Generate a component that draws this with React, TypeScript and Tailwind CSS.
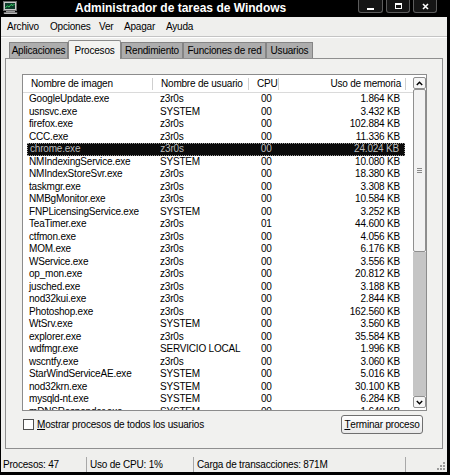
import React from 'react';

const rows: [string, string, string, string][] = [
    ['GoogleUpdate.exe', 'z3r0s', '00', '1.864 KB'],
    ['usnsvc.exe', 'SYSTEM', '00', '3.432 KB'],
    ['firefox.exe', 'z3r0s', '00', '102.884 KB'],
    ['CCC.exe', 'z3r0s', '00', '11.336 KB'],
    ['chrome.exe', 'z3r0s', '00', '24.024 KB'],
    ['NMIndexingService.exe', 'SYSTEM', '00', '10.080 KB'],
    ['NMIndexStoreSvr.exe', 'z3r0s', '00', '18.380 KB'],
    ['taskmgr.exe', 'z3r0s', '00', '3.308 KB'],
    ['NMBgMonitor.exe', 'z3r0s', '00', '10.584 KB'],
    ['FNPLicensingService.exe', 'SYSTEM', '00', '3.252 KB'],
    ['TeaTimer.exe', 'z3r0s', '01', '44.600 KB'],
    ['ctfmon.exe', 'z3r0s', '00', '4.056 KB'],
    ['MOM.exe', 'z3r0s', '00', '6.176 KB'],
    ['WService.exe', 'z3r0s', '00', '3.556 KB'],
    ['op_mon.exe', 'z3r0s', '00', '20.812 KB'],
    ['jusched.exe', 'z3r0s', '00', '3.188 KB'],
    ['nod32kui.exe', 'z3r0s', '00', '2.844 KB'],
    ['Photoshop.exe', 'z3r0s', '00', '162.560 KB'],
    ['WtSrv.exe', 'SYSTEM', '00', '3.560 KB'],
    ['explorer.exe', 'z3r0s', '00', '35.584 KB'],
    ['wdfmgr.exe', 'SERVICIO LOCAL', '00', '1.996 KB'],
    ['wscntfy.exe', 'z3r0s', '00', '3.060 KB'],
    ['StarWindServiceAE.exe', 'SYSTEM', '00', '5.016 KB'],
    ['nod32krn.exe', 'SYSTEM', '00', '30.100 KB'],
    ['mysqld-nt.exe', 'SYSTEM', '00', '6.284 KB'],
    ['mDNSResponder.exe', 'SYSTEM', '00', '1.640 KB'],
];

const SELECTED = 4;

const AppIcon = () => (
    <svg width="15" height="13" viewBox="0 0 15 13">
        <rect x="0.5" y="0.5" width="13" height="9" fill="#c9c9c9" stroke="#6b6b6b" />
        <rect x="2" y="2" width="10" height="6" fill="#0d3b2a" />
        <polyline points="2.5,6.5 4.5,5 6,6 8,3.5 10,4.5 11.5,3" fill="none" stroke="#3ee06a" strokeWidth="0.9" />
        <rect x="3" y="10" width="9" height="1.5" fill="#9a9a9a" />
        <rect x="1" y="11.5" width="13" height="1.5" fill="#d8d8d8" stroke="#6b6b6b" strokeWidth="0.5" />
    </svg>
);

const CaptionButton = ({ kind, w }: { kind: 'min' | 'max' | 'close'; w: string }) => (
    <div className={`${w} h-[13px] bg-[#151515] border border-t-0 border-[#5c5c5c] rounded-b-[3px] flex items-center justify-center`}>
        {kind === 'min' && <div className="w-[7px] h-[2px] bg-white mt-[5px]" />}
        {kind === 'max' && <div className="w-[7px] h-[6px] border border-white border-t-2" />}
        {kind === 'close' && (
            <svg width="7" height="7" viewBox="0 0 7 7">
                <path d="M1 1 L6 6 M6 1 L1 6" stroke="white" strokeWidth="1.6" />
            </svg>
        )}
    </div>
);

const Tab = ({ label, w, active }: { label: string; w: string; active?: boolean }) =>
    active ? (
        <div className={`${w} h-[19px] -mb-px relative z-10 bg-[#f3f3f1] border border-b-0 border-[#8a8a8a] rounded-t-[2px] flex items-center justify-center`}>
            {label}
        </div>
    ) : (
        <div className={`${w} h-[16px] bg-[#adadad] border border-b-0 border-[#858585] flex items-center justify-center`}>
            {label}
        </div>
    );

const HeaderSep = () => <div className="w-px h-[12px] bg-[#cfcfcf]" />;

export default function App() {
    return (
        <div
            className="w-[450px] h-[475px] bg-black flex flex-col overflow-hidden text-[10px] tracking-[-0.2px] text-black"
            style={{ fontFamily: '"Liberation Sans", Arial, sans-serif' }}
        >
            {/* title bar */}
            <div className="h-[17px] flex items-start shrink-0">
                <div className="pl-[3px] pt-[1px]">
                    <AppIcon />
                </div>
                <div className="ml-[57px] text-white font-bold text-[12px] tracking-normal leading-[16px]">
                    Administrador de tareas de Windows
                </div>
                <div className="ml-auto mr-[13px] flex gap-[3px]">
                    <CaptionButton kind="min" w="w-[25px]" />
                    <CaptionButton kind="max" w="w-[24px]" />
                    <CaptionButton kind="close" w="w-[24px]" />
                </div>
            </div>

            {/* client */}
            <div className="flex-1 ml-px mr-[3px] mb-[3px] bg-[#efefed] flex flex-col">
                {/* menu */}
                <div className="h-[19px] flex items-center pl-[6px] shrink-0">
                    <span className="w-[43px]">Archivo</span>
                    <span className="w-[49px]">Opciones</span>
                    <span className="w-[25px]">Ver</span>
                    <span className="w-[42px]">Apagar</span>
                    <span>Ayuda</span>
                </div>
                <div className="h-px bg-[#c4c4c4] shrink-0" />
                <div className="h-px bg-white shrink-0" />

                {/* tabs */}
                <div className="h-[20px] flex items-end pl-[8px] shrink-0">
                    <Tab label="Aplicaciones" w="w-[59px]" />
                    <Tab label="Procesos" w="w-[53px]" active />
                    <Tab label="Rendimiento" w="w-[62px]" />
                    <Tab label="Funciones de red" w="w-[83px]" />
                    <Tab label="Usuarios" w="w-[47px]" />
                </div>

                {/* tab panel */}
                <div className="ml-[4px] w-[438px] h-[391px] border border-[#8f8f8f] bg-[#f1f1ef] pl-[16px] pt-[15px] shrink-0">
                    {/* list view */}
                    <div className="w-[405px] h-[337px] border border-[#8c8c8c] bg-white flex">
                        <div className="w-[390px] flex flex-col">
                            <div className="h-[18px] flex items-center border-b border-[#dadada] shrink-0">
                                <div className="w-[129px] pl-[8px]">Nombre de imagen</div>
                                <HeaderSep />
                                <div className="w-[95px] pl-[8px]">Nombre de usuario</div>
                                <HeaderSep />
                                <div className="w-[29px] pl-[8px]">CPU</div>
                                <HeaderSep />
                                <div className="w-[126px] pr-[4px] text-right">Uso de memoria</div>
                                <HeaderSep />
                            </div>
                            <div className="flex-1 overflow-hidden">
                                {rows.map(([name, user, cpu, mem], i) => (
                                    <div key={name} className="h-[12.5px] flex items-center leading-[12px]">
                                        <div
                                            className={`flex items-center h-full ml-[4px] w-[378px] ${
                                                i === SELECTED
                                                    ? 'bg-[#0b0b0b] text-[#bdbdbd] border border-dotted border-[#9a9a9a]'
                                                    : ''
                                            }`}
                                        >
                                            <div className="w-[125px] pl-[2px] whitespace-nowrap">{name}</div>
                                            <div className="w-[96px] pl-[8px] whitespace-nowrap">{user}</div>
                                            <div className="w-[30px] pl-[13px]">{cpu}</div>
                                            <div className="w-[127px] pr-[5px] text-right">{mem}</div>
                                        </div>
                                    </div>
                                ))}
                            </div>
                        </div>
                        {/* scrollbar */}
                        <div className="w-[13px] flex flex-col pt-[2px] pb-[2px]">
                            <div className="h-[12px] bg-[#f6f6f6] border border-[#8f8f8f] rounded-[2px] flex items-center justify-center">
                                <svg width="7" height="5" viewBox="0 0 7 5">
                                    <path d="M0.8 4 L3.5 1.2 L6.2 4" fill="none" stroke="black" strokeWidth="1.4" />
                                </svg>
                            </div>
                            <div className="h-[163px] bg-[#f2f2f2] border border-[#8f8f8f] rounded-[2px] flex flex-col items-center justify-center gap-[1px]">
                                <div className="w-[5px] h-px bg-[#8a8a8a]" />
                                <div className="w-[5px] h-px bg-[#8a8a8a]" />
                                <div className="w-[5px] h-px bg-[#8a8a8a]" />
                            </div>
                            <div className="flex-1 bg-[#c5c5c5]" />
                            <div className="h-[12px] bg-[#f6f6f6] border border-[#8f8f8f] rounded-[2px] flex items-center justify-center">
                                <svg width="7" height="5" viewBox="0 0 7 5">
                                    <path d="M0.8 1 L3.5 3.8 L6.2 1" fill="none" stroke="black" strokeWidth="1.4" />
                                </svg>
                            </div>
                        </div>
                    </div>

                    {/* bottom row */}
                    <div className="mt-[3px] h-[20px] w-[405px] flex items-center">
                        <div className="ml-px w-[11px] h-[11px] bg-white border border-[#4f4f4f]" />
                        <div className="ml-[3px]">
                            <span className="underline">M</span>ostrar procesos de todos los usuarios
                        </div>
                        <div className="ml-auto mr-[4px] w-[82px] h-[19px] border border-[#6f6f6f] rounded-[3px] bg-gradient-to-b from-white to-[#e9e9e9] flex items-center justify-center whitespace-nowrap">
                            <span className="underline">T</span>erminar proceso
                        </div>
                    </div>
                </div>

                {/* status bar */}
                <div className="flex-1 flex items-center pt-[7px] relative">
                    <div className="w-[85px] pl-[2px]">Procesos: 47</div>
                    <div className="w-[107px] h-[15px] border-l border-[#a8a8a8] pl-[3px] flex items-center">Uso de CPU: 1%</div>
                    <div className="w-[212px] h-[15px] border-l border-[#a8a8a8] pl-[3px] flex items-center">
                        Carga de transacciones: 871M
                    </div>
                    <div className="h-[15px] border-l border-[#a8a8a8]" />
                    <svg className="absolute right-[1px] bottom-[1px]" width="11" height="11" viewBox="0 0 11 11">
                        <g fill="#9a9a9a">
                            <rect x="8" y="2" width="2" height="2" />
                            <rect x="5" y="5" width="2" height="2" />
                            <rect x="8" y="5" width="2" height="2" />
                            <rect x="2" y="8" width="2" height="2" />
                            <rect x="5" y="8" width="2" height="2" />
                            <rect x="8" y="8" width="2" height="2" />
                        </g>
                    </svg>
                </div>
            </div>
        </div>
    );
}
